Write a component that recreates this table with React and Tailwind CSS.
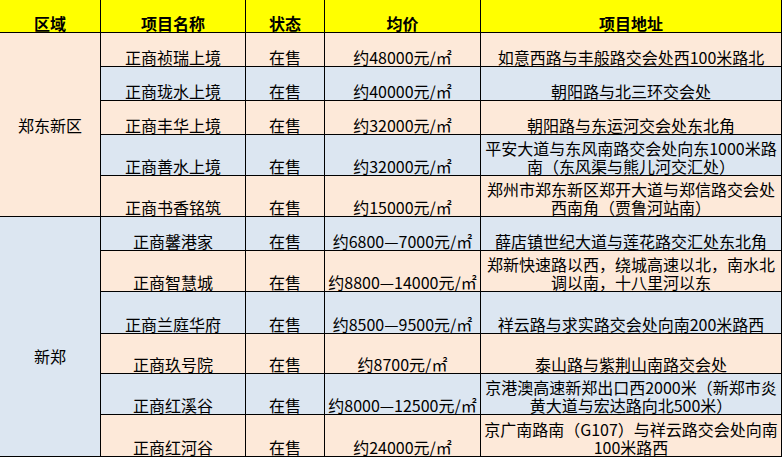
import React from "react";

const rows = [
  { name: "正商祯瑞上境", price: "约48000元/㎡", addr: ["如意西路与丰般路交会处西100米路北"] },
  { name: "正商珑水上境", price: "约40000元/㎡", addr: ["朝阳路与北三环交会处"] },
  { name: "正商丰华上境", price: "约32000元/㎡", addr: ["朝阳路与东运河交会处东北角"] },
  { name: "正商善水上境", price: "约32000元/㎡", addr: ["平安大道与东风南路交会处向东1000米路", "南（东风渠与熊儿河交汇处）"] },
  { name: "正商书香铭筑", price: "约15000元/㎡", addr: ["郑州市郑东新区郑开大道与郑信路交会处", "西南角（贾鲁河站南）"] },
  { name: "正商馨港家", price: "约6800—7000元/㎡", addr: ["薛店镇世纪大道与莲花路交汇处东北角"] },
  { name: "正商智慧城", price: "约8800—14000元/㎡", addr: ["郑新快速路以西，绕城高速以北，南水北", "调以南，十八里河以东"] },
  { name: "正商兰庭华府", price: "约8500—9500元/㎡", addr: ["祥云路与求实路交会处向南200米路西"] },
  { name: "正商玖号院", price: "约8700元/㎡", addr: ["泰山路与紫荆山南路交会处"] },
  { name: "正商红溪谷", price: "约8000—12500元/㎡", addr: ["京港澳高速新郑出口西2000米（新郑市炎", "黄大道与宏达路向北500米）"] },
  { name: "正商红河谷", price: "约24000元/㎡", addr: ["京广南路南（G107）与祥云路交会处向南", "100米路西"] },
];

const cell = "border-r border-b border-black flex flex-col items-center justify-end text-center whitespace-nowrap leading-[18px]";

export default function App() {
  return (
    <div className="w-[783px] h-[457px] overflow-hidden bg-white text-black text-[16px] font-['Noto_Sans_CJK_SC',sans-serif]">
      <div className="grid grid-cols-[101px_145px_79px_156px_301px] grid-rows-[33px_34px_34px_34px_41px_41px_34px_41px_42px_40px_41px_42px]">
        {["区域", "项目名称", "状态", "均价", "项目地址"].map((h) => (
          <div key={h} className={`${cell} bg-[#ffff00] font-bold`}>
            {h}
          </div>
        ))}
        {rows.map((r, i) => {
          const bg = i % 2 === 0 ? "bg-[#fde9d9]" : "bg-[#dce6f1]";
          return (
            <React.Fragment key={r.name}>
              {i === 0 && (
                <div className="row-span-5 border-r border-b border-black bg-[#fde9d9] flex items-center justify-center leading-[18px]">
                  郑东新区
                </div>
              )}
              {i === 5 && (
                <div className="row-span-6 border-r border-b border-black bg-[#dce6f1] flex justify-center pt-[130px] leading-[18px]">
                  新郑
                </div>
              )}
              <div className={`${cell} ${bg}`}>{r.name}</div>
              <div className={`${cell} ${bg}`}>在售</div>
              <div className={`${cell} ${bg}`}>{r.price}</div>
              <div className={`${cell} ${bg}`}>
                {r.addr.map((line) => (
                  <span key={line}>{line}</span>
                ))}
              </div>
            </React.Fragment>
          );
        })}
      </div>
    </div>
  );
}
